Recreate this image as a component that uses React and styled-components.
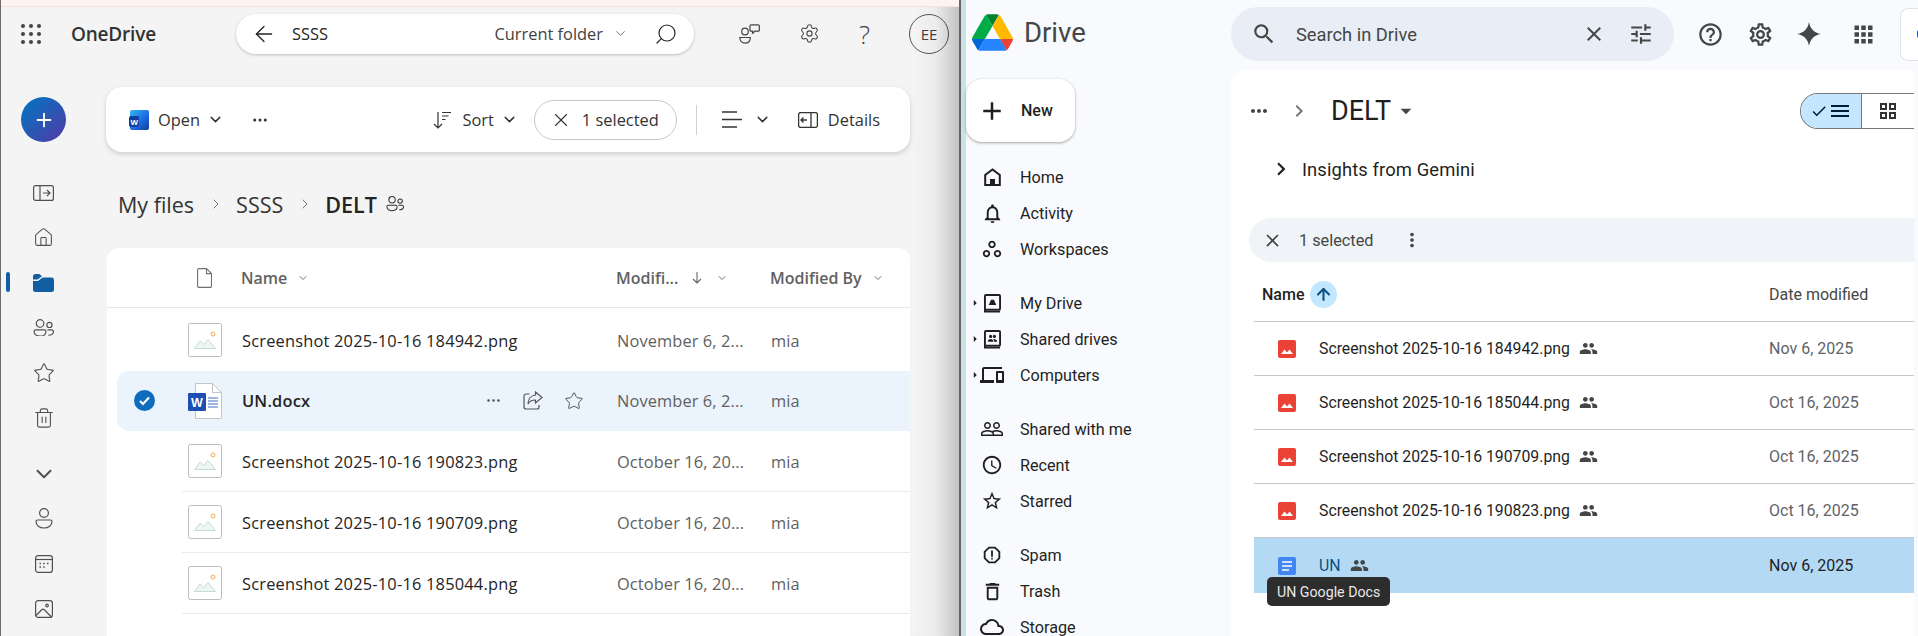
import styled, { createGlobalStyle } from 'styled-components'
import {
  MdAdd, MdSearch, MdClose, MdTune, MdHelpOutline, MdOutlineSettings, MdApps, MdCheck, MdMenu,
  MdPeople, MdMoreVert, MdMoreHoriz, MdChevronRight, MdArrowDropDown,
  MdArrowRight, MdNotificationsNone, MdOutlineWorkspaces, MdPeopleOutline, MdAccessTime,
  MdStarBorder, MdOutlineReport, MdDeleteOutline, MdCloudQueue, MdDevices,
} from 'react-icons/md'
import {
  ArrowLeft, ArrowUp, Search, Settings, Star, Trash2, Home, ChevronDown, ChevronRight, X, Ellipsis, Plus,
} from 'lucide-react'

const Global = createGlobalStyle`
  html, body { margin: 0; padding: 0; height: 636px; overflow: hidden; background: #f4f4f4; }
  * { box-sizing: border-box; }
`

const Screen = styled.div`
  display: flex;
  width: 1918px;
  height: 636px;
  overflow: hidden;
`

/* ---- OneDrive window ---- */
const OneDrive = styled.section`
  position: relative;
  width: 959px;
  flex: none;
  height: 100%;
  background: #f4f4f4;
  border-left: 1px solid #6b6b6b;
  font-family: 'Open Sans', sans-serif;
  color: #242424;
  &::after {
    content: '';
    position: absolute;
    top: 7px; right: 0; bottom: 0;
    width: 48px;
    background: linear-gradient(to right, rgba(0,0,0,0), rgba(0,0,0,.03) 50%, rgba(0,0,0,.2));
    pointer-events: none;
  }
`
const TitleStrip = styled.div`
  height: 7px;
  background: #fdf3ef;
  border-bottom: 1px solid #f8e2dc;
`
const TopBar = styled.header`
  height: 63px;
  display: flex;
  align-items: center;
  padding-bottom: 10px;
`
const Waffle = styled.div`
  width: 20px;
  margin-left: 20px;
  display: grid;
  grid-template-columns: repeat(3, 4px);
  gap: 4px;
  span { width: 4px; height: 4px; border-radius: 50%; background: #444; }
`
const Brand = styled.div`
  margin-left: 30px;
  width: 165px;
  font-size: 19px;
  font-weight: 600;
  color: #333;
  letter-spacing: -.2px;
`
const SearchBox = styled.div`
  width: 458px;
  height: 40px;
  border-radius: 20px;
  background: #fff;
  box-shadow: 0 1px 3px rgba(0,0,0,.22);
  display: flex;
  align-items: center;
  padding-left: 15px;
  font-size: 16.4px;
`
const SearchTerm = styled.span`
  margin-left: 15px;
  flex: 1;
`
const Scope = styled.span`
  color: #424242;
  margin-right: 10px;
`
const HeadIcons = styled.div`
  display: flex;
  align-items: center;
  margin-left: 45px;
  color: #444;
`
const HeadIcon = styled.div`
  width: 60px;
  display: flex;
  justify-content: flex-start;
`
const Help = styled.span`
  font-size: 26px;
  font-weight: 300;
  line-height: 1;
`
const Avatar = styled.div`
  width: 40px;
  height: 40px;
  border-radius: 50%;
  border: 1px solid #555;
  display: flex;
  align-items: center;
  justify-content: center;
  font-size: 15px;
  color: #424242;
  margin-left: -10px;
`
const OdBody = styled.div`
  display: flex;
`
const Rail = styled.nav`
  width: 106px;
  flex: none;
  padding: 27px 21px 0 0;
  display: flex;
  flex-direction: column;
  align-items: center;
`
const CreateButton = styled.div`
  width: 45px;
  height: 45px;
  border-radius: 50%;
  background: linear-gradient(135deg, #0f6cbd 20%, #4f3aa6 95%);
  color: #fff;
  display: flex;
  align-items: center;
  justify-content: center;
  margin-bottom: 28px;
`
const RailItem = styled.div`
  position: relative;
  width: 100%;
  height: 45px;
  flex: none;
  display: flex;
  align-items: center;
  justify-content: center;
  color: ${p => (p.$active ? '#115ea3' : '#505050')};
  margin-top: ${p => p.$gap || 0}px;
  &::before {
    content: '';
    display: ${p => (p.$active ? 'block' : 'none')};
    position: absolute;
    left: 5px;
    top: 12px;
    width: 4px;
    height: 20px;
    border-radius: 2px;
    background: #115ea3;
  }
`
const OdMain = styled.main`
  width: 803px;
  padding-top: 17px;
`
const CommandBar = styled.div`
  height: 65px;
  width: 804px;
  margin-left: -1px;
  background: #fff;
  border-radius: 16px;
  box-shadow: 0 2px 5px rgba(0,0,0,.16);
  display: flex;
  align-items: center;
  padding-left: 23px;
  font-size: 16.4px;
  color: #333;
`
const CommandLabel = styled.span`
  display: flex;
  margin-left: ${p => p.$ml || 0}px;
  margin-right: ${p => p.$mr || 0}px;
`
const CommandChevron = styled(ChevronDown).attrs({ size: 17, strokeWidth: 2 })`
  margin-left: ${p => p.$ml || 7}px;
`
const Grow = styled.div`
  flex: 1;
`
const SelectedPill = styled.div`
  width: 143px;
  height: 40px;
  border: 1px solid #c8c8c8;
  border-radius: 20px;
  display: flex;
  align-items: center;
  gap: 10px;
  padding-left: 15px;
  margin-left: 16px;
`
const VDivider = styled.div`
  width: 1px;
  height: 30px;
  background: #d1d1d1;
  margin: 0 25px 0 19px;
`
const Crumbs = styled.div`
  height: 96px;
  display: flex;
  align-items: center;
  padding: 8px 0 0 11px;
  font-size: 21.5px;
  color: #333;
`
const CrumbSep = styled.span`
  display: flex;
  margin: 0 12px 0 14px;
  color: #555;
`
const CrumbNow = styled.strong`
  font-weight: 600;
  color: #242424;
  margin-right: 9px;
`
const FileCard = styled.div`
  height: 388px;
  background: #fff;
  border-radius: 12px 12px 0 0;
`
const OdHeader = styled.div`
  height: 60px;
  border-bottom: 1px solid #e6e6e6;
  display: grid;
  grid-template-columns: 90px 44px 375px 154px 1fr;
  align-items: center;
  font-size: 16px;
  font-weight: 600;
  color: #616161;
`
const HeadCell = styled.div`
  display: flex;
  align-items: center;
  gap: ${p => p.$gap || 10}px;
  grid-column: ${p => p.$col || 'auto'};
`
const OdRow = styled.div`
  height: ${p => (p.$selected ? 60 : 61)}px;
  margin-left: ${p => (p.$selected ? 10 : 75)}px;
  margin-top: ${p => (p.$first ? 2 : 0)}px;
  display: grid;
  grid-template-columns: ${p => (p.$selected ? '71px 54px 243px 132px 154px 1fr' : '6px 54px 243px 132px 154px 1fr')};
  align-items: center;
  background: ${p => (p.$selected ? '#ebf3fc' : 'transparent')};
  border-radius: ${p => (p.$selected ? '12px 0 0 12px' : 0)};
  border-bottom: 1px solid ${p => (p.$lined ? '#eaeaea' : 'transparent')};
  font-size: 16.4px;
  letter-spacing: .2px;
`
const OdCheck = styled.div`
  display: flex;
  padding-left: 17px;
`
const OdName = styled.div`
  font-weight: ${p => (p.$bold ? 600 : 400)};
  white-space: nowrap;
`
const OdActions = styled.div`
  display: flex;
  align-items: center;
  gap: 21px;
  color: #555;
`
const OdMuted = styled.div`
  color: #616161;
  letter-spacing: .1px;
`

/* ---- Drive window ---- */
const Drive = styled.section`
  flex: 1;
  height: 100%;
  display: flex;
  flex-direction: column;
  background: #f8fafd;
  border-left: 2px solid #666;
  border-right: 3px solid #c2dde6;
  font-family: 'Roboto', sans-serif;
  color: #1f1f1f;
  box-shadow: inset 5px 0 0 #c9e2e6;
  padding-left: 5px;
`
const DriveHead = styled.header`
  height: 70px;
  flex: none;
  display: flex;
  align-items: flex-start;
  color: #444746;
`
const LogoWrap = styled.div`
  display: flex;
  align-items: center;
  width: 265px;
  padding: 14px 0 0 6px;
`
const LogoText = styled.span`
  margin-left: 11px;
  font-size: 27.5px;
  color: #444746;
`
const DriveSearch = styled.div`
  width: 443px;
  height: 54px;
  margin-top: 7px;
  border-radius: 27px;
  background: #e9eef6;
  display: flex;
  align-items: center;
  padding-left: 20px;
  font-size: 18.3px;
`
const DriveSearchText = styled.span`
  margin-left: 19px;
  flex: 1;
`
const DriveTools = styled.div`
  display: flex;
  align-items: center;
  margin-top: 7px;
  height: 54px;
  padding-left: 23px;
  gap: 23px;
  flex: 1;
`
const SidePanelTab = styled.div`
  width: 20px;
  height: 53px;
  margin-left: auto;
  border: 1px solid #dfe3e8;
  border-right: 0;
  border-radius: 8px 0 0 8px;
  background: #fff;
  display: flex;
  align-items: center;
  justify-content: flex-end;
  &::after { content: ''; width: 3px; height: 8px; background: #1a56c4; border-radius: 2px 0 0 2px; }
`
const DriveBody = styled.div`
  flex: 1;
  display: flex;
  min-height: 0;
`
const DriveSide = styled.nav`
  width: 265px;
  flex: none;
`
const NewButton = styled.div`
  width: 109px;
  height: 63px;
  margin-top: 9px;
  margin-bottom: 17px;
  background: #fff;
  border-radius: 16px;
  box-shadow: 0 1px 3px rgba(0,0,0,.35);
  display: flex;
  align-items: center;
  padding-left: 11px;
  gap: 14px;
  font-size: 16px;
  font-weight: 500;
  color: #1f1f1f;
`
const NavItem = styled.div`
  position: relative;
  height: 36px;
  display: flex;
  align-items: center;
  gap: 16px;
  padding-left: 14px;
  font-size: 16.2px;
  color: #1f1f1f;
  margin-top: ${p => p.$gap || 0}px;
  svg { flex: none; }
`
const NavArrow = styled.span`
  position: absolute;
  left: 2px;
  top: 11px;
  display: flex;
`
const NavGlyph = styled.span`
  width: 24px;
  flex: none;
  display: flex;
  align-items: center;
  justify-content: center;
`
const DrivePanel = styled.main`
  position: relative;
  width: 683px;
  background: #fff;
  border-radius: 16px 0 0 0;
  overflow: hidden;
`
const FolderBar = styled.div`
  height: 76px;
  display: flex;
  align-items: center;
  padding: 6px 0 0 16px;
  color: #444746;
`
const FolderName = styled.span`
  font-size: 27px;
  color: #1f1f1f;
  margin: 0 2px 0 20px;
`
const ViewToggle = styled.div`
  margin-left: auto;
  width: 114px;
  height: 36px;
  display: flex;
  border: 1px solid #747775;
  border-right: 0;
  border-radius: 18px 0 0 18px;
  overflow: hidden;
`
const ToggleSide = styled.div`
  width: ${p => (p.$on ? 62 : 52)}px;
  display: flex;
  align-items: center;
  justify-content: center;
  background: ${p => (p.$on ? '#c2e7ff' : '#fff')};
  border-right: ${p => (p.$on ? '1px solid #747775' : 0)};
  color: ${p => (p.$on ? '#001d35' : '#333')};
`
const Insights = styled.div`
  height: 46px;
  display: flex;
  align-items: center;
  gap: 8px;
  padding-left: 37px;
  font-size: 18.4px;
  color: #1f1f1f;
  letter-spacing: .1px;
`
const SelectionBar = styled.div`
  margin: 26px 0 0 18px;
  height: 44px;
  background: #f0f4f9;
  border-radius: 22px 0 0 22px;
  display: flex;
  align-items: center;
  padding-left: 13px;
  font-size: 16.3px;
  color: #444746;
`
const SelectionText = styled.span`
  margin: 0 28px 0 16px;
`
const DriveTableHead = styled.div`
  height: 60px;
  display: grid;
  grid-template-columns: 515px 1fr;
  align-items: center;
  margin-left: 23px;
  border-bottom: 1px solid #c8c8c8;
  padding-top: 5px;
  font-size: 16px;
  font-weight: 500;
`
const SortName = styled.div`
  display: flex;
  align-items: center;
  gap: 6px;
  margin-left: 8px;
`
const SortBadge = styled.span`
  width: 27px;
  height: 27px;
  border-radius: 50%;
  background: #c2e7ff;
  color: #0b4f82;
  display: flex;
  align-items: center;
  justify-content: center;
`
const DateHead = styled.span`
  color: #444746;
  font-weight: 400;
`
const DriveRow = styled.div`
  height: ${p => (p.$selected ? 55 : 54)}px;
  margin-left: 23px;
  display: grid;
  grid-template-columns: 24px 41px 450px 1fr;
  align-items: center;
  border-bottom: ${p => (p.$selected ? 0 : '1px solid #c8c8c8')};
  background: ${p => (p.$selected ? '#b3d9f5' : 'transparent')};
  font-size: 15.8px;
  color: ${p => (p.$selected ? '#0b4f82' : '#1f1f1f')};
`
const DriveIcon = styled.div`
  grid-column: 2;
  display: flex;
`
const DriveName = styled.div`
  display: flex;
  align-items: center;
  gap: 9px;
  white-space: nowrap;
  svg { color: #444746; }
`
const DriveDate = styled.div`
  font-size: 16px;
  color: ${p => (p.$selected ? '#1f1f1f' : '#5f6368')};
`
const Tooltip = styled.div`
  position: absolute;
  left: 36px;
  top: 507px;
  height: 29px;
  padding: 0 10px;
  border-radius: 5px;
  background: #2d2d2d;
  color: #e8e8e8;
  font-size: 14.2px;
  display: flex;
  align-items: center;
`

/* ---- icons ---- */
const WordGlyph = ({ size = 20 }) => (
  <svg width={size} height={size} viewBox="0 0 20 20">
    <defs>
      <linearGradient id="wg" x1="0" y1="0" x2="1" y2="1">
        <stop offset="0" stopColor="#35b8f1" />
        <stop offset=".6" stopColor="#1a66e0" />
        <stop offset="1" stopColor="#103f91" />
      </linearGradient>
    </defs>
    <rect x="1" y="0" width="19" height="20" rx="2" fill="url(#wg)" />
    <rect x="0" y="6" width="10" height="11" rx="2" fill="#0f3f9e" />
    <text x="1.500" y="14.500" fontSize="8" fontWeight="700" fill="#fff" fontFamily="Liberation Sans">W</text>
  </svg>
)
const Thumb = () => (
  <svg width="34" height="34" viewBox="0 0 34 34">
    <rect x=".5" y=".5" width="33" height="33" rx="2" fill="#fff" stroke="#bdbdbd" />
    <circle cx="25" cy="11" r="2" fill="none" stroke="#f4a94e" />
    <path d="M6.500 25.500 12 18l4 3.500 4-5 7.500 9z" fill="#eef6f2" stroke="#c5dcd2" />
  </svg>
)
const DocThumb = () => (
  <svg width="34" height="36" viewBox="0 0 34 36">
    <path d="M7.500.5h17l9 9v25a1 1 0 0 1-1 1h-25z" fill="#fff" stroke="#c4c4c4" />
    <path d="M24.500.5v9h9" fill="none" stroke="#c4c4c4" />
    <path d="M20 15h10M20 18h10M20 21h10M20 24h10" stroke="#3a6fc4" strokeWidth="1" />
    <rect x="0" y="10" width="18" height="18" rx="1" fill="#1d50b2" />
    <text x="3" y="24" fontSize="12.500" fontWeight="700" fill="#fff" fontFamily="Liberation Sans">W</text>
  </svg>
)
const PanelIn = () => (
  <svg width="21" height="16" viewBox="0 0 21 16" fill="none" stroke="currentColor" strokeWidth="1.200">
    <rect x=".6" y=".6" width="19.800" height="14.800" rx="2" />
    <path d="M7 .6v14.800M10 8h7M14 5l3 3-3 3" />
  </svg>
)
const Folder = () => (
  <svg width="21" height="18" viewBox="0 0 21 18" fill="currentColor">
    <path d="M0 2.500A2.500 2.500 0 0 1 2.500 0h3.800L9 2.200 4.500 5.500H0z" />
    <path d="M0 7h5l4.600-3.400H18.500A2.500 2.500 0 0 1 21 6v9.500a2.500 2.500 0 0 1-2.500 2.500h-16A2.500 2.500 0 0 1 0 15.500z" />
  </svg>
)
const TwoPeople = ({ w = 21 }) => (
  <svg width={w} height={w * 0.85} viewBox="0 0 21 18" fill="none" stroke="currentColor" strokeWidth="1.200">
    <circle cx="7" cy="4.500" r="3.800" />
    <circle cx="16.500" cy="6" r="2.600" />
    <path d="M1 12.500a1.500 1.500 0 0 1 1.500-1.500h9A1.500 1.500 0 0 1 13 12.500c0 3-2.500 4.800-6 4.800s-6-1.800-6-4.800z" />
    <path d="M14.500 11h4.500a1.500 1.500 0 0 1 1.500 1.500c0 2.300-1.800 3.800-5 3.800" />
  </svg>
)
const Person = () => (
  <svg width="18" height="21" viewBox="0 0 18 21" fill="none" stroke="currentColor" strokeWidth="1.200">
    <circle cx="9" cy="5" r="4.400" />
    <path d="M1 13.500a1.500 1.500 0 0 1 1.500-1.500h13a1.500 1.500 0 0 1 1.500 1.500c0 4-3.500 6.500-8 6.500s-8-2.500-8-6.500z" />
  </svg>
)
const CalendarDots = () => (
  <svg width="18" height="18" viewBox="0 0 18 18" fill="none" stroke="currentColor" strokeWidth="1.200">
    <rect x=".6" y=".6" width="16.800" height="16.800" rx="2.500" />
    <path d="M.6 4.500h16.800" />
    <path d="M4.500 8.500h1.500M8.200 8.500h1.500M12 8.500h1.500M4.500 12h1.500M8.200 12h1.500" strokeWidth="1.700" />
  </svg>
)
const Picture = () => (
  <svg width="18" height="18" viewBox="0 0 18 18" fill="none" stroke="currentColor" strokeWidth="1.200">
    <rect x=".6" y=".6" width="16.800" height="16.800" rx="2.500" />
    <circle cx="12" cy="5.500" r="1.300" />
    <path d="M1 15.500 7 9.500a1.500 1.500 0 0 1 2 0l7.500 7.500" />
  </svg>
)
const Feedback = () => (
  <svg width="21" height="20" viewBox="0 0 21 20" fill="none" stroke="currentColor" strokeWidth="1.200">
    <circle cx="6" cy="7.500" r="3.300" />
    <path d="M.8 13.500h10.500c0 3.500-2.200 5.700-5.200 5.700S.8 17 .8 13.500z" />
    <path d="M12 .8h7.300a1 1 0 0 1 1 1v4.400a1 1 0 0 1-1 1H16l-2.500 2V7.200H12a1 1 0 0 1-1-1V1.800a1 1 0 0 1 1-1z" />
  </svg>
)
const SortLines = () => (
  <svg width="18" height="18" viewBox="0 0 18 18" fill="none" stroke="currentColor" strokeWidth="1.200">
    <path d="M5 1v16M1 13l4 4 4-4" />
    <path d="M9 1.500h9M9 5h6.500M9 8.500h3.500" />
  </svg>
)
const ListLines = () => (
  <svg width="20" height="17" viewBox="0 0 20 17" fill="none" stroke="currentColor">
    <path d="M0 1h15M0 8.500h20M0 16h15" strokeWidth="1.300" />
  </svg>
)
const Details = () => (
  <svg width="20" height="16" viewBox="0 0 20 16" fill="none" stroke="currentColor" strokeWidth="1.300">
    <rect x=".6" y=".6" width="18.800" height="14.800" rx="2" />
    <path d="M13 .6v14.800M9 8H3M5.500 5.500 3 8l2.500 2.500" />
  </svg>
)
const Sheet = () => (
  <svg width="15" height="20" viewBox="0 0 15 20" fill="none" stroke="#707070" strokeWidth="1.100">
    <path d="M2 .6h7.500l5 5V18a1.400 1.400 0 0 1-1.400 1.400H2A1.400 1.400 0 0 1 .6 18V2A1.400 1.400 0 0 1 2 .6z" />
    <path d="M9.500.6V5.600h5" />
  </svg>
)
const ShareBox = () => (
  <svg width="20" height="19" viewBox="0 0 20 19" fill="none" stroke="currentColor" strokeWidth="1.200">
    <path d="M6.500 3H3a2 2 0 0 0-2 2v11a2 2 0 0 0 2 2h11a2 2 0 0 0 2-2v-2" />
    <path d="M12.500 1 19 6.500 12.500 12V9C9 9 6.500 10 5 13c0-5 3-8.500 7.500-9z" />
  </svg>
)
const ArrowDownThin = () => (
  <svg width="10" height="12" viewBox="0 0 10 12" fill="none" stroke="#666" strokeWidth="1.100">
    <path d="M5 0v11M1 7l4 4 4-4" />
  </svg>
)
const DriveLogo = () => (
  <svg width="41" height="37" viewBox="0 0 87.300 78">
    <path d="m6.600 66.850 3.850 6.650c.8 1.400 1.950 2.500 3.300 3.300l13.750-23.800h-27.500c0 1.550.4 3.100 1.200 4.500z" fill="#0066da" />
    <path d="m43.650 25-13.750-23.800c-1.350.8-2.500 1.900-3.300 3.300l-25.400 44a9.060 9.060 0 0 0 -1.200 4.500h27.500z" fill="#00ac47" />
    <path d="m73.550 76.800c1.350-.8 2.500-1.900 3.300-3.300l1.600-2.750 7.650-13.250c.8-1.400 1.200-2.950 1.200-4.500h-27.502l5.852 11.500z" fill="#ea4335" />
    <path d="m43.650 25 13.750-23.800c-1.350-.8-2.900-1.200-4.500-1.200h-18.500c-1.600 0-3.150.45-4.500 1.200z" fill="#00832d" />
    <path d="m59.800 53h-32.300l-13.750 23.800c1.350.8 2.900 1.200 4.500 1.200h50.800c1.600 0 3.150-.45 4.500-1.200z" fill="#2684fc" />
    <path d="m73.400 26.500-12.700-22c-.8-1.400-1.950-2.500-3.300-3.300l-13.750 23.800 16.150 28h27.450c0-1.550-.4-3.100-1.200-4.500z" fill="#ffba00" />
  </svg>
)
const Spark = () => (
  <svg width="24" height="24" viewBox="0 0 24 24" fill="currentColor">
    <path d="M12 0c1 6.500 5 10.800 12 12-7 1.200-11 5.500-12 12-1-6.500-5-10.800-12-12C7 10.800 11 6.500 12 0z" />
  </svg>
)
const DriveBox = ({ kind }) => (
  <svg width="17" height="19" viewBox="0 0 18 20" fill="none" stroke="currentColor" strokeWidth="2">
    <rect x="1" y="1" width="16" height="15.500" rx="1" />
    <path d="M1 16v2.500h16" strokeWidth="2" />
    {kind === 'mine'
      ? <path d="M5 11.500 7.500 6h3L13 11.500z" fill="currentColor" strokeWidth="0" />
      : <path d="M4 12.500c0-2 1.500-3 3-3s3 1 3 3zM10.800 12.500c0-1.300-.4-2.300-1-3 2-.4 4.200.8 4.200 3zM7 8.500a1.700 1.700 0 1 0 0-3.400 1.700 1.700 0 0 0 0 3.400zM11 8.500a1.700 1.700 0 1 0 0-3.400 1.700 1.700 0 0 0 0 3.400z" fill="currentColor" strokeWidth="0" />}
  </svg>
)
const HomeSolid = () => (
  <svg width="17" height="18" viewBox="0 0 17 18" fill="none" stroke="currentColor" strokeWidth="2">
    <path d="M1.200 17V7L8.500 1.500 15.800 7v10z" />
    <rect x="6" y="11" width="5" height="6" fill="currentColor" strokeWidth="0" />
  </svg>
)
const RedImage = () => (
  <svg width="18" height="18" viewBox="0 0 18 18">
    <rect width="18" height="18" rx="2" fill="#ea4335" />
    <path d="M3 14 6.500 9.500 9 12.500 11.500 9.500 15 14z" fill="#fff" />
  </svg>
)
const BlueDoc = () => (
  <svg width="18" height="18" viewBox="0 0 18 18">
    <rect width="18" height="18" rx="2" fill="#4285f4" />
    <path d="M4 5h10M4 9h10M4 13h7" stroke="#fff" strokeWidth="1.600" />
  </svg>
)
const TileGrid = () => (
  <svg width="16" height="16" viewBox="0 0 16 16" fill="none" stroke="currentColor" strokeWidth="2">
    <rect x="1" y="1" width="5" height="5" />
    <rect x="10" y="1" width="5" height="5" />
    <rect x="1" y="10" width="5" height="5" />
    <rect x="10" y="10" width="5" height="5" />
  </svg>
)

const odFiles = [
  { name: 'Screenshot 2025-10-16 184942.png', date: 'November 6, 2...' },
  { name: 'UN.docx', date: 'November 6, 2...', selected: true },
  { name: 'Screenshot 2025-10-16 190823.png', date: 'October 16, 20...', lined: true },
  { name: 'Screenshot 2025-10-16 190709.png', date: 'October 16, 20...', lined: true },
  { name: 'Screenshot 2025-10-16 185044.png', date: 'October 16, 20...', lined: true },
]

const driveFiles = [
  { name: 'Screenshot 2025-10-16 184942.png', date: 'Nov 6, 2025' },
  { name: 'Screenshot 2025-10-16 185044.png', date: 'Oct 16, 2025' },
  { name: 'Screenshot 2025-10-16 190709.png', date: 'Oct 16, 2025' },
  { name: 'Screenshot 2025-10-16 190823.png', date: 'Oct 16, 2025' },
  { name: 'UN', date: 'Nov 6, 2025', doc: true, selected: true },
]

function OneDrivePane() {
  return (
    <OneDrive>
      <TitleStrip />
      <TopBar>
        <Waffle>{Array.from({ length: 9 }, (_, i) => <span key={i} />)}</Waffle>
        <Brand>OneDrive</Brand>
        <SearchBox>
          <ArrowLeft size={26} strokeWidth={1.200} />
          <SearchTerm>SSSS</SearchTerm>
          <Scope>Current folder</Scope>
          <ChevronDown size={15} strokeWidth={1} />
          <Search size={24} strokeWidth={1.200} style={{ margin: '0 16px 0 26px', transform: 'scaleX(-1)' }} />
        </SearchBox>
        <HeadIcons>
          <HeadIcon><Feedback /></HeadIcon>
          <HeadIcon><Settings size={21} strokeWidth={1.200} /></HeadIcon>
          <HeadIcon><Help>?</Help></HeadIcon>
          <Avatar>EE</Avatar>
        </HeadIcons>
      </TopBar>
      <OdBody>
        <Rail>
          <CreateButton><Plus size={22} strokeWidth={2} /></CreateButton>
          <RailItem><PanelIn /></RailItem>
          <RailItem><Home size={21} strokeWidth={1.200} /></RailItem>
          <RailItem $active><Folder /></RailItem>
          <RailItem><TwoPeople /></RailItem>
          <RailItem><Star size={22} strokeWidth={1.200} /></RailItem>
          <RailItem><Trash2 size={22} strokeWidth={1.200} /></RailItem>
          <RailItem $gap={11}><ChevronDown size={26} strokeWidth={1.800} /></RailItem>
          <RailItem><Person /></RailItem>
          <RailItem><CalendarDots /></RailItem>
          <RailItem><Picture /></RailItem>
        </Rail>
        <OdMain>
          <CommandBar>
            <WordGlyph />
            <CommandLabel $ml={9}>Open</CommandLabel>
            <CommandChevron />
            <Ellipsis size={18} strokeWidth={2} style={{ marginLeft: 27 }} />
            <Grow />
            <SortLines />
            <CommandLabel $ml={11}>Sort</CommandLabel>
            <CommandChevron />
            <SelectedPill>
              <X size={22} strokeWidth={1.200} />
              <span>1 selected</span>
            </SelectedPill>
            <VDivider />
            <ListLines />
            <CommandChevron $ml={12} />
            <CommandLabel $ml={27}><Details /></CommandLabel>
            <CommandLabel $ml={10} $mr={30}>Details</CommandLabel>
          </CommandBar>
          <Crumbs>
            <span>My files</span>
            <CrumbSep><ChevronRight size={16} strokeWidth={1.200} /></CrumbSep>
            <span>SSSS</span>
            <CrumbSep><ChevronRight size={16} strokeWidth={1.200} /></CrumbSep>
            <CrumbNow>DELT</CrumbNow>
            <TwoPeople w={18} />
          </Crumbs>
          <FileCard>
            <OdHeader>
              <HeadCell $col={2}><Sheet /></HeadCell>
              <HeadCell>Name <ChevronDown size={12} strokeWidth={1.800} /></HeadCell>
              <HeadCell $gap={14}>Modifi... <ArrowDownThin /> <ChevronDown size={12} strokeWidth={1.800} /></HeadCell>
              <HeadCell>Modified By <ChevronDown size={12} strokeWidth={1.800} /></HeadCell>
            </OdHeader>
            {odFiles.map((f, i) => (
              <OdRow key={f.name} $selected={f.selected} $lined={f.lined} $first={i === 0}>
                {f.selected ? (
                  <OdCheck>
                    <svg width="21" height="21" viewBox="0 0 21 21">
                      <circle cx="10.500" cy="10.500" r="10.500" fill="#0f6cbd" />
                      <path d="M6 11l3 3 6-6.500" fill="none" stroke="#fff" strokeWidth="2.200" />
                    </svg>
                  </OdCheck>
                ) : <span />}
                {f.selected ? <DocThumb /> : <Thumb />}
                <OdName $bold={f.selected}>{f.name}</OdName>
                {f.selected ? (
                  <OdActions>
                    <Ellipsis size={17} strokeWidth={1.800} />
                    <ShareBox />
                    <Star size={20} strokeWidth={1.200} />
                  </OdActions>
                ) : <span />}
                <OdMuted>{f.date}</OdMuted>
                <OdMuted>mia</OdMuted>
              </OdRow>
            ))}
          </FileCard>
        </OdMain>
      </OdBody>
    </OneDrive>
  )
}

function DrivePane() {
  return (
    <Drive>
      <DriveHead>
        <LogoWrap>
          <DriveLogo />
          <LogoText>Drive</LogoText>
        </LogoWrap>
        <DriveSearch>
          <MdSearch size={26} />
          <DriveSearchText>Search in Drive</DriveSearchText>
          <MdClose size={24} style={{ marginRight: 22 }} />
          <MdTune size={26} style={{ marginRight: 20 }} />
        </DriveSearch>
        <DriveTools>
          <MdHelpOutline size={27} />
          <MdOutlineSettings size={27} />
          <Spark />
          <MdApps size={27} style={{ marginLeft: 6 }} />
          <SidePanelTab />
        </DriveTools>
      </DriveHead>
      <DriveBody>
        <DriveSide>
          <NewButton><MdAdd size={30} /> New</NewButton>
          <NavItem><NavGlyph><HomeSolid /></NavGlyph> Home</NavItem>
          <NavItem><NavGlyph><MdNotificationsNone size={23} /></NavGlyph> Activity</NavItem>
          <NavItem><NavGlyph><MdOutlineWorkspaces size={22} /></NavGlyph> Workspaces</NavItem>
          <NavItem $gap={18}><NavArrow><MdArrowRight size={14} /></NavArrow><NavGlyph><DriveBox kind="mine" /></NavGlyph> My Drive</NavItem>
          <NavItem><NavArrow><MdArrowRight size={14} /></NavArrow><NavGlyph><DriveBox kind="shared" /></NavGlyph> Shared drives</NavItem>
          <NavItem><NavArrow><MdArrowRight size={14} /></NavArrow><NavGlyph><MdDevices size={24} /></NavGlyph> Computers</NavItem>
          <NavItem $gap={18}><NavGlyph><MdPeopleOutline size={24} /></NavGlyph> Shared with me</NavItem>
          <NavItem><NavGlyph><MdAccessTime size={22} /></NavGlyph> Recent</NavItem>
          <NavItem><NavGlyph><MdStarBorder size={22} /></NavGlyph> Starred</NavItem>
          <NavItem $gap={18}><NavGlyph><MdOutlineReport size={22} /></NavGlyph> Spam</NavItem>
          <NavItem><NavGlyph><MdDeleteOutline size={23} /></NavGlyph> Trash</NavItem>
          <NavItem><NavGlyph><MdCloudQueue size={24} /></NavGlyph> Storage</NavItem>
        </DriveSide>
        <DrivePanel>
          <FolderBar>
            <MdMoreHoriz size={24} />
            <MdChevronRight size={24} style={{ marginLeft: 16, color: '#747775' }} />
            <FolderName>DELT</FolderName>
            <MdArrowDropDown size={26} />
            <ViewToggle>
              <ToggleSide $on>
                <MdCheck size={18} />
                <MdMenu size={24} />
              </ToggleSide>
              <ToggleSide><TileGrid /></ToggleSide>
            </ViewToggle>
          </FolderBar>
          <Insights>
            <MdChevronRight size={26} />
            <span>Insights from Gemini</span>
          </Insights>
          <SelectionBar>
            <MdClose size={21} />
            <SelectionText>1 selected</SelectionText>
            <MdMoreVert size={22} />
          </SelectionBar>
          <DriveTableHead>
            <SortName>
              Name
              <SortBadge><ArrowUp size={19} strokeWidth={2.600} /></SortBadge>
            </SortName>
            <DateHead>Date modified</DateHead>
          </DriveTableHead>
          {driveFiles.map(f => (
            <DriveRow key={f.name} $selected={f.selected}>
              <DriveIcon>{f.doc ? <BlueDoc /> : <RedImage />}</DriveIcon>
              <DriveName>
                {f.name}
                <MdPeople size={19} />
              </DriveName>
              <DriveDate $selected={f.selected}>{f.date}</DriveDate>
            </DriveRow>
          ))}
          <Tooltip>UN Google Docs</Tooltip>
        </DrivePanel>
      </DriveBody>
    </Drive>
  )
}

export default function App() {
  return (
    <>
      <Global />
      <Screen>
        <OneDrivePane />
        <DrivePane />
      </Screen>
    </>
  )
}
